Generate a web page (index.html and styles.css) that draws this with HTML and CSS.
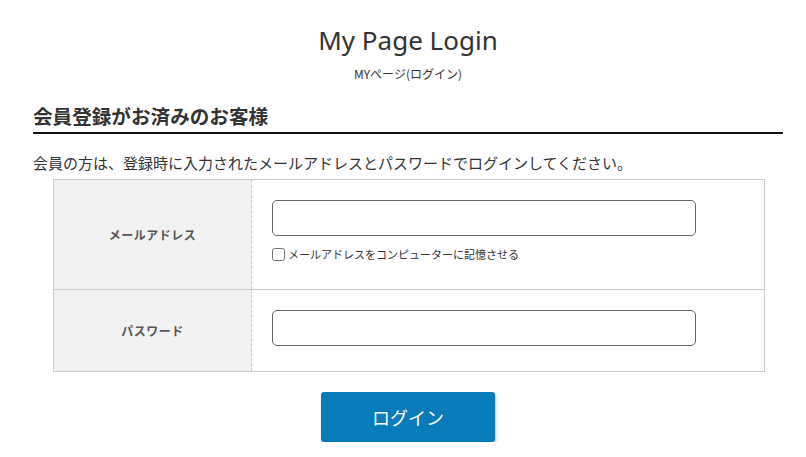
FILE: index.html
```html
<!DOCTYPE html>
<html lang="ja">
<head>
    <meta charset="UTF-8">
    <meta name="viewport" content="width=device-width, initial-scale=1.0">
    <title>My Page Login</title>
    <link rel="stylesheet" href="styles.css">
</head>
<body>
    <div class="container">
        <h1 class="page-title">My Page Login</h1>
        <p class="page-sub">MYページ(ログイン)</p>

        <!-- 会員ログイン -->
        <h2 class="section-title">会員登録がお済みのお客様</h2>
        <p class="lead">会員の方は、登録時に入力されたメールアドレスとパスワードでログインしてください。</p>

        <table class="login-table">
            <tr class="row-mail">
                <th>メールアドレス</th>
                <td>
                    <input type="email" class="text-input" id="email">
                    <label class="remember">
                        <input type="checkbox" id="remember">
                        <span>メールアドレスをコンピューターに記憶させる</span>
                    </label>
                </td>
            </tr>
            <tr class="row-pass">
                <th>パスワード</th>
                <td>
                    <input type="password" class="text-input" id="password">
                </td>
            </tr>
        </table>

        <div class="actions">
            <button type="submit" class="btn-login">ログイン</button>
        </div>
    </div>
</body>
</html>
```

FILE: styles.css
```css
/* 基本 */
body {
    margin: 0;
    background: #fff;
    color: #333;
    font-family: "Noto Sans CJK JP", "Noto Sans", sans-serif;
}
.container {
    width: 750px;
    margin: 0 23px 0 33px;
    padding-top: 22px;
}
.page-title {
    margin: 0;
    text-align: center;
    font-family: "Noto Sans", "Noto Sans CJK JP", sans-serif;
    font-weight: normal;
    font-size: 26px;
    line-height: 36px;
    color: #333;
}
.page-sub {
    margin: 7px 0 0;
    text-align: center;
    font-size: 12px;
    line-height: 17px;
}
.section-title {
    margin: 20px 0 0;
    padding-bottom: 2px;
    font-size: 19.6px;
    line-height: 28px;
    font-weight: bold;
    border-bottom: 2px solid #111;
}
.lead {
    margin: 18px 0 0;
    font-size: 15px;
    line-height: 22px;
}

/* ログインフォーム */
.login-table {
    width: 712px;
    margin: 5px 0 0 20px;
    border-collapse: collapse;
    border: 1px solid #ccc;
}
.login-table th {
    width: 195px;
    background: #f2f2f2;
    border-right: 1px dashed #ccc;
    border-bottom: 1px solid #ccc;
    font-size: 12px;
    font-weight: bold;
    color: #555;
    letter-spacing: 0.5px;
}
.login-table td {
    padding: 20px 20px 0;
    border-bottom: 1px solid #ccc;
    vertical-align: top;
}
.row-mail td {
    height: 89px;
}
.row-pass td {
    height: 61px;
}
.text-input {
    display: block;
    box-sizing: border-box;
    width: 424px;
    height: 36px;
    margin: 0;
    border: 1px solid #666;
    border-radius: 5px;
    padding: 0 10px;
    font-size: 14px;
}
.remember {
    display: flex;
    align-items: center;
    margin-top: 10px;
    font-size: 11px;
    line-height: 16px;
    color: #333;
}
.remember input {
    width: 13px;
    height: 13px;
    margin: 0 3px 0 0;
}

.actions {
    margin-top: 20px;
    text-align: center;
}
.btn-login {
    width: 174px;
    height: 50px;
    background: #087bbb;
    border: none;
    border-radius: 3px;
    color: #fff;
    font-family: "Noto Sans CJK JP", sans-serif;
    font-size: 18px;
    box-shadow: 1px 2px 3px rgba(0, 0, 0, 0.25);
    cursor: pointer;
}
```
